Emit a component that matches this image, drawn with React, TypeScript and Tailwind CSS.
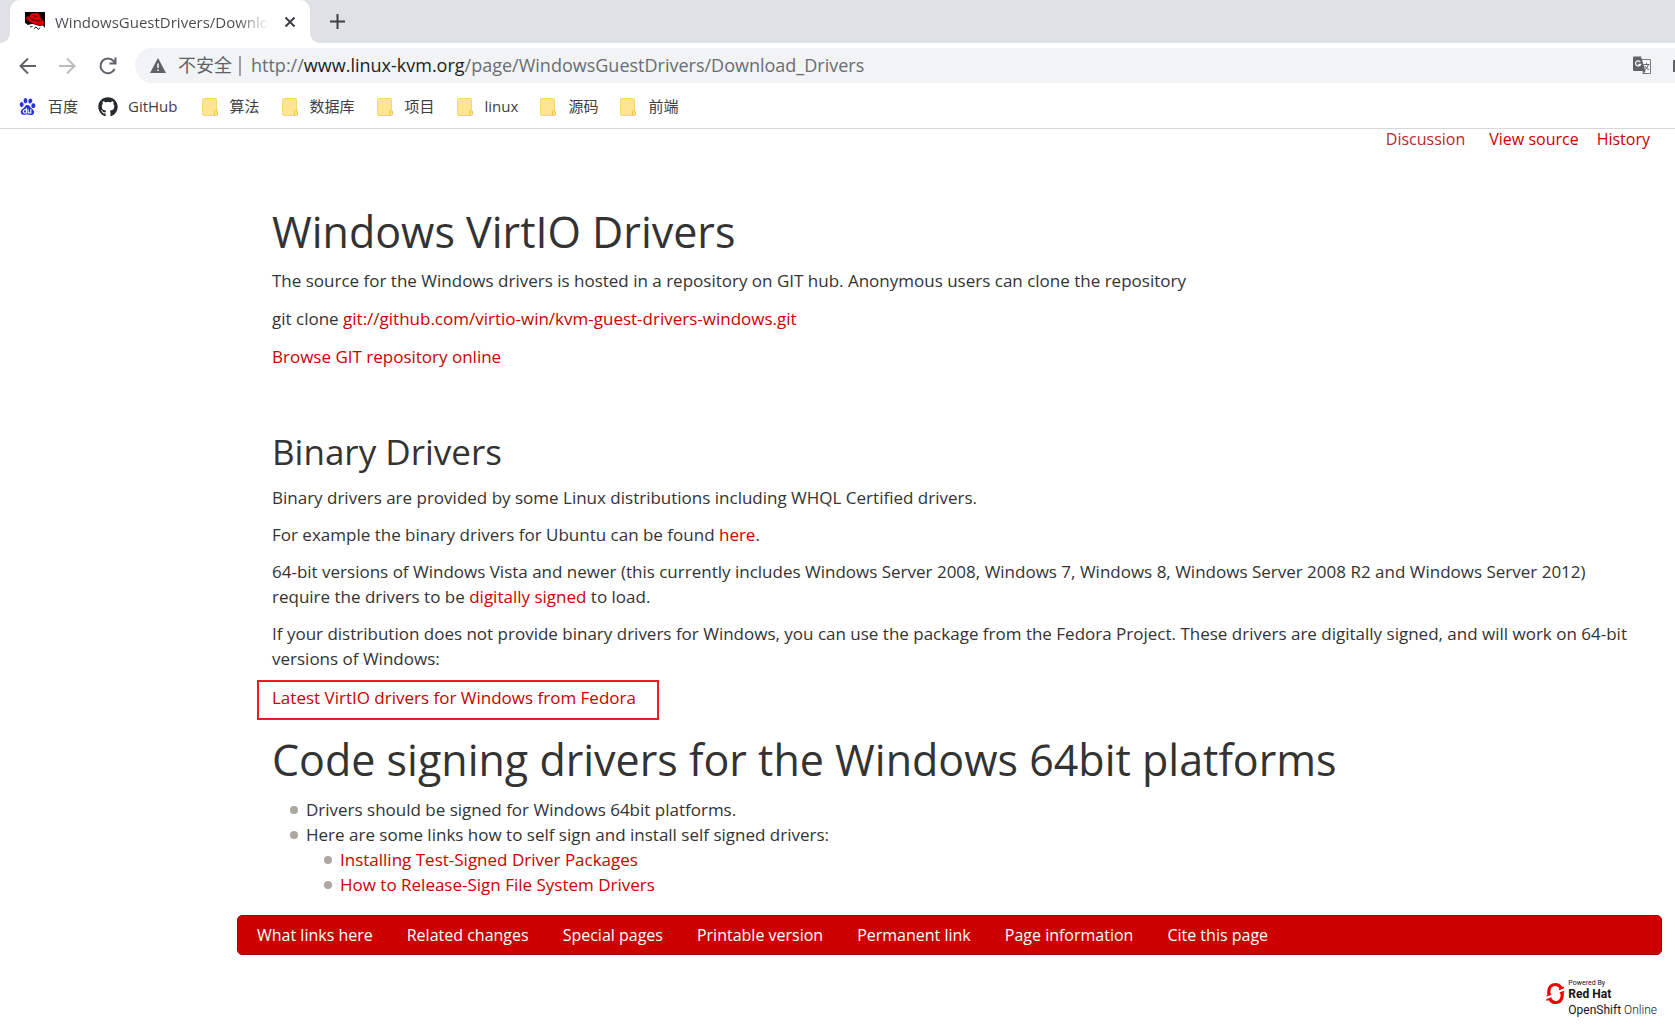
import { FaGithub } from "react-icons/fa";
import { SiBaidu } from "react-icons/si";
import type { ReactNode } from "react";

function Link({ children, className = "text-[#cc0000]" }: { children: ReactNode; className?: string }) {
  return (
    <a href="#" className={className}>
      {children}
    </a>
  );
}

function Favicon() {
  return (
    <svg width="20" height="19" viewBox="0 0 20 19" className="shrink-0" aria-hidden="true">
      <path d="M0 0H20V16H0Z" fill="#000" />
      <path d="M0 11L3 12.500L8 12L14 14L18 13.500L20 16V19H0Z" fill="#fff" />
      <path
        d="M5.500 2C6.500 .8 8 1.500 9.500 1.300C11 .9 12.500 .3 13.500 1.400C15 3 15.500 5 16 7C18 7.800 19.500 9.500 19.200 11.300C18.700 13.600 15 14 11.500 12.800C7 11.300 2.500 9 1 6.500C.4 4.800 2 4.200 4.800 4.600Z"
        fill="#d40000"
      />
      <path d="M4.700 5C6.500 8 11 9.500 15.500 8.500M8 3.500L11.500 4.500" stroke="#4a0000" strokeWidth="1" fill="none" />
      <path d="M2 12.500L4.500 12M5 15L7.500 14.500M9 16.500L11 15L13.500 17.500L15 15.500" stroke="#222" strokeWidth="1" fill="none" />
    </svg>
  );
}

function Folder() {
  return (
    <svg width="16" height="18" viewBox="0 0 16 18" className="shrink-0" aria-hidden="true">
      <rect x=".5" y=".5" width="14" height="17" rx="1" fill="#ffe591" stroke="#f5d76a" />
      <rect x="12.500" y="12.500" width="3" height="5" rx="1" fill="#ffe27a" stroke="#eec63c" />
    </svg>
  );
}

function Translate() {
  return (
    <svg width="19" height="19" viewBox="0 0 19 19" aria-hidden="true">
      <path d="M9 3.500H17.500V17.500H9.500" fill="#f8f9fa" stroke="#77797c" />
      <path d="M0 1.500Q0 .5 1 .5H8L12.500 15H1Q0 15 0 14Z" fill="#5f6368" />
      <path d="M7.300 5.900A2.600 2.600 0 1 0 7.600 8.300H5.200" fill="none" stroke="#fff" strokeWidth="1.200" />
      <path d="M10.500 8.500H16.500M13.500 7V8.500M15.500 8.500Q14.500 12.500 11.500 14M11.800 10Q13 12.500 16 14" fill="none" stroke="#5f6368" />
      <path d="M9.500 15H12.500L10.500 18Z" fill="#5f6368" />
    </svg>
  );
}

function NavIcon({ d, color, label }: { d: string; color: string; label: string }) {
  return (
    <button type="button" aria-label={label} className="flex size-5 items-center justify-center">
      <svg width="20" height="20" viewBox="0 0 20 20" fill="none" stroke={color} strokeWidth="2" aria-hidden="true">
        <path d={d} />
      </svg>
    </button>
  );
}

function Bullet({ children }: { children: ReactNode }) {
  return (
    <div className="flex items-center pl-[18px]">
      <span className="mr-2 size-2 rounded-full bg-[#aea79f]" />
      <div>{children}</div>
    </div>
  );
}

const folders = ["算法", "数据库", "项目", "linux", "源码", "前端"];
const footerLinks = [
  "What links here",
  "Related changes",
  "Special pages",
  "Printable version",
  "Permanent link",
  "Page information",
  "Cite this page",
];

function Browser() {
  return (
    <header className="font-['Open_Sans','Noto_Sans_CJK_SC',sans-serif] text-[#3c4043]">
      <div className="flex h-[43px] items-end bg-[#dee1e6]">
        <div className="size-[10px] bg-white">
          <div className="size-full rounded-br-[10px] bg-[#dee1e6]" />
        </div>
        <div className="flex h-full w-[300px] items-center justify-between rounded-t-[10px] bg-white pr-[14px] pl-[15px]">
          <div className="flex items-center gap-[10px]">
            <Favicon />
            <span className="bg-gradient-to-r from-[#45494d] from-85% to-transparent bg-clip-text pt-px text-[15px] whitespace-nowrap text-transparent">
              WindowsGuestDrivers/Downlo
            </span>
          </div>
          <button type="button" aria-label="Close tab">
            <svg width="12" height="12" viewBox="0 0 12 12" stroke="#3c4043" strokeWidth="2" aria-hidden="true">
              <path d="M1.500 1.500L10.500 10.500M10.500 1.500L1.500 10.500" />
            </svg>
          </button>
        </div>
        <div className="size-[10px] bg-white">
          <div className="size-full rounded-bl-[10px] bg-[#dee1e6]" />
        </div>
        <button type="button" aria-label="New tab" className="mb-[14px] ml-[10px]">
          <svg width="15" height="15" viewBox="0 0 15 15" stroke="#3c4043" strokeWidth="2" aria-hidden="true">
            <path d="M7.500 0V15M0 7.500H15" />
          </svg>
        </button>
      </div>
      <div className="flex h-[45px] items-center pl-[18px]">
        <div className="flex gap-5">
          <NavIcon label="Back" color="#5f6368" d="M18 10H3M10 2.500L2.500 10L10 17.500" />
          <NavIcon label="Forward" color="#bbbdbf" d="M1 10H16M9 2.500L16.500 10L9 17.500" />
          <NavIcon label="Reload" color="#5f6368" d="M16.600 13A7.400 7.400 0 1 1 15.500 5L17 6.500M17.500 1.500V7.500H11.500" />
        </div>
        <form className="ml-[17px] flex h-[35px] flex-1 items-center rounded-l-full bg-[#f1f3f4] pl-[15px]">
          <svg width="16" height="15" viewBox="0 0 16 15" aria-hidden="true">
            <path d="M8 0L16 15H0Z" fill="#5f6368" />
            <path d="M8 5.500V10M8 11.500V13" stroke="#f1f3f4" strokeWidth="1.600" />
          </svg>
          <span className="ml-3 text-[18px] text-[#5f6368]">不安全</span>
          <span className="mr-[10px] ml-[7px] h-5 w-[2px] bg-[#9aa0a6]" />
          <span className="flex-1 text-[18px] text-[#6a6d71]">
            http://<span className="text-[#202124]">www.linux-kvm.org</span>/page/WindowsGuestDrivers/Download_Drivers
          </span>
          <button type="button" aria-label="Translate this page" className="mr-[21px]">
            <Translate />
          </button>
          <span className="h-3 w-[2px] bg-[#5f6368]" />
        </form>
      </div>
      <nav aria-label="Bookmarks" className="flex h-[41px] items-center border-b border-[#d5d7d9] pb-[3px] pl-[19px] text-[15px] whitespace-nowrap">
        <a href="#" className="flex items-center">
          <SiBaidu size={17} color="#2932e1" />
          <span className="ml-3">百度</span>
        </a>
        <a href="#" className="ml-5 flex items-center">
          <FaGithub size={20} color="#24292e" />
          <span className="ml-[10px]">GitHub</span>
        </a>
        <div className="ml-6 flex gap-[22px]">
          {folders.map((name) => (
            <a href="#" key={name} className="flex items-center gap-3">
              <Folder />
              <span>{name}</span>
            </a>
          ))}
        </div>
      </nav>
    </header>
  );
}

function OpenShift() {
  return (
    <a href="#" aria-label="Powered by Red Hat OpenShift Online" className="flex gap-[3px] font-['Roboto',sans-serif] text-[#151515]">
      <svg width="19" height="23" viewBox="0 0 19 23" className="mt-[2px]" fill="none" stroke="#f00000" strokeWidth="3.200" aria-hidden="true">
        <path d="M2.800 12.500V9.500Q3.200 2.500 9.500 2.500Q13 2.500 15.300 6M16.200 10.500V13.500Q15.800 20.500 9.500 20.500Q6 20.500 3.700 17" />
        <path d="M.8 13.800L5 12M13 7.500L18 5.200M13.800 11.300L18.200 9.500M.3 18.200L5.500 15.800" strokeWidth="1.600" />
      </svg>
      <span className="flex flex-col">
        <span className="text-[7px] leading-[7px]">Powered By</span>
        <span className="text-[12px] leading-[14px] font-bold">Red Hat</span>
        <span className="text-[12px] leading-[18px]">
          OpenShift <span className="font-light">Online</span>
        </span>
      </span>
    </a>
  );
}

export default function App() {
  return (
    <div className="bg-white">
      <Browser />
      <div className="font-['Open_Sans',sans-serif] text-[17px] leading-[25px] text-[#333333]">
        <nav aria-label="Page actions" className="flex justify-end pr-[25px] text-base leading-5">
          <Link className="mr-6 text-[#b52a2a]">Discussion</Link>
          <Link className="mr-[18px] text-[#cc0000]">View source</Link>
          <Link>History</Link>
        </nav>
        <main className="pr-[45px] pl-[272px]">
          <h1 className="mt-[58px] text-[43px] leading-[50px]">Windows VirtIO Drivers</h1>
          <div className="mt-[11px] flex flex-col gap-[13px]">
            <p>The source for the Windows drivers is hosted in a repository on GIT hub. Anonymous users can clone the repository</p>
            <p>
              git clone <Link>git://github.com/virtio-win/kvm-guest-drivers-windows.git</Link>
            </p>
            <p>
              <Link>Browse GIT repository online</Link>
            </p>
          </div>
          <h2 className="mt-[61px] text-[35px] leading-[44px]">Binary Drivers</h2>
          <div className="mt-[11px] flex flex-col gap-3">
            <p>Binary drivers are provided by some Linux distributions including WHQL Certified drivers.</p>
            <p>
              For example the binary drivers for Ubuntu can be found <Link>here</Link>.
            </p>
            <p>
              64-bit versions of Windows Vista and newer (this currently includes Windows Server 2008, Windows 7, Windows 8, Windows Server 2008 R2 and Windows Server 2012) require the drivers to be <Link>digitally signed</Link> to load.
            </p>
            <p>
              If your distribution does not provide binary drivers for Windows, you can use the package from the Fedora Project. These drivers are digitally signed, and will work on 64-bit versions of Windows:
            </p>
          </div>
          <p className="mt-[9px] -ml-[15px] flex h-10 w-[402px] items-start border-2 border-[#ed1c24] pt-[3px] pl-[13px]">
            <Link>Latest VirtIO drivers for Windows from Fedora</Link>
          </p>
          <h1 className="mt-[15px] text-[43px] leading-[50px]">Code signing drivers for the Windows 64bit platforms</h1>
          <ul className="mt-3">
            <li>
              <Bullet>Drivers should be signed for Windows 64bit platforms.</Bullet>
            </li>
            <li>
              <Bullet>Here are some links how to self sign and install self signed drivers:</Bullet>
              <ul className="pl-[34px]">
                <li>
                  <Bullet>
                    <Link>Installing Test-Signed Driver Packages</Link>
                  </Bullet>
                </li>
                <li>
                  <Bullet>
                    <Link>How to Release-Sign File System Drivers</Link>
                  </Bullet>
                </li>
              </ul>
            </li>
          </ul>
        </main>
        <footer className="mt-[18px] mr-[13px] ml-[237px]">
          <nav aria-label="Page tools" className="flex h-10 items-center gap-[34px] rounded-[5px] border border-[#ad0000] bg-[#cc0000] pl-[19px] text-base text-white">
            {footerLinks.map((name) => (
              <a href="#" key={name}>
                {name}
              </a>
            ))}
          </nav>
          <div className="mt-[25px] flex justify-end pr-[5px]">
            <OpenShift />
          </div>
        </footer>
      </div>
    </div>
  );
}
